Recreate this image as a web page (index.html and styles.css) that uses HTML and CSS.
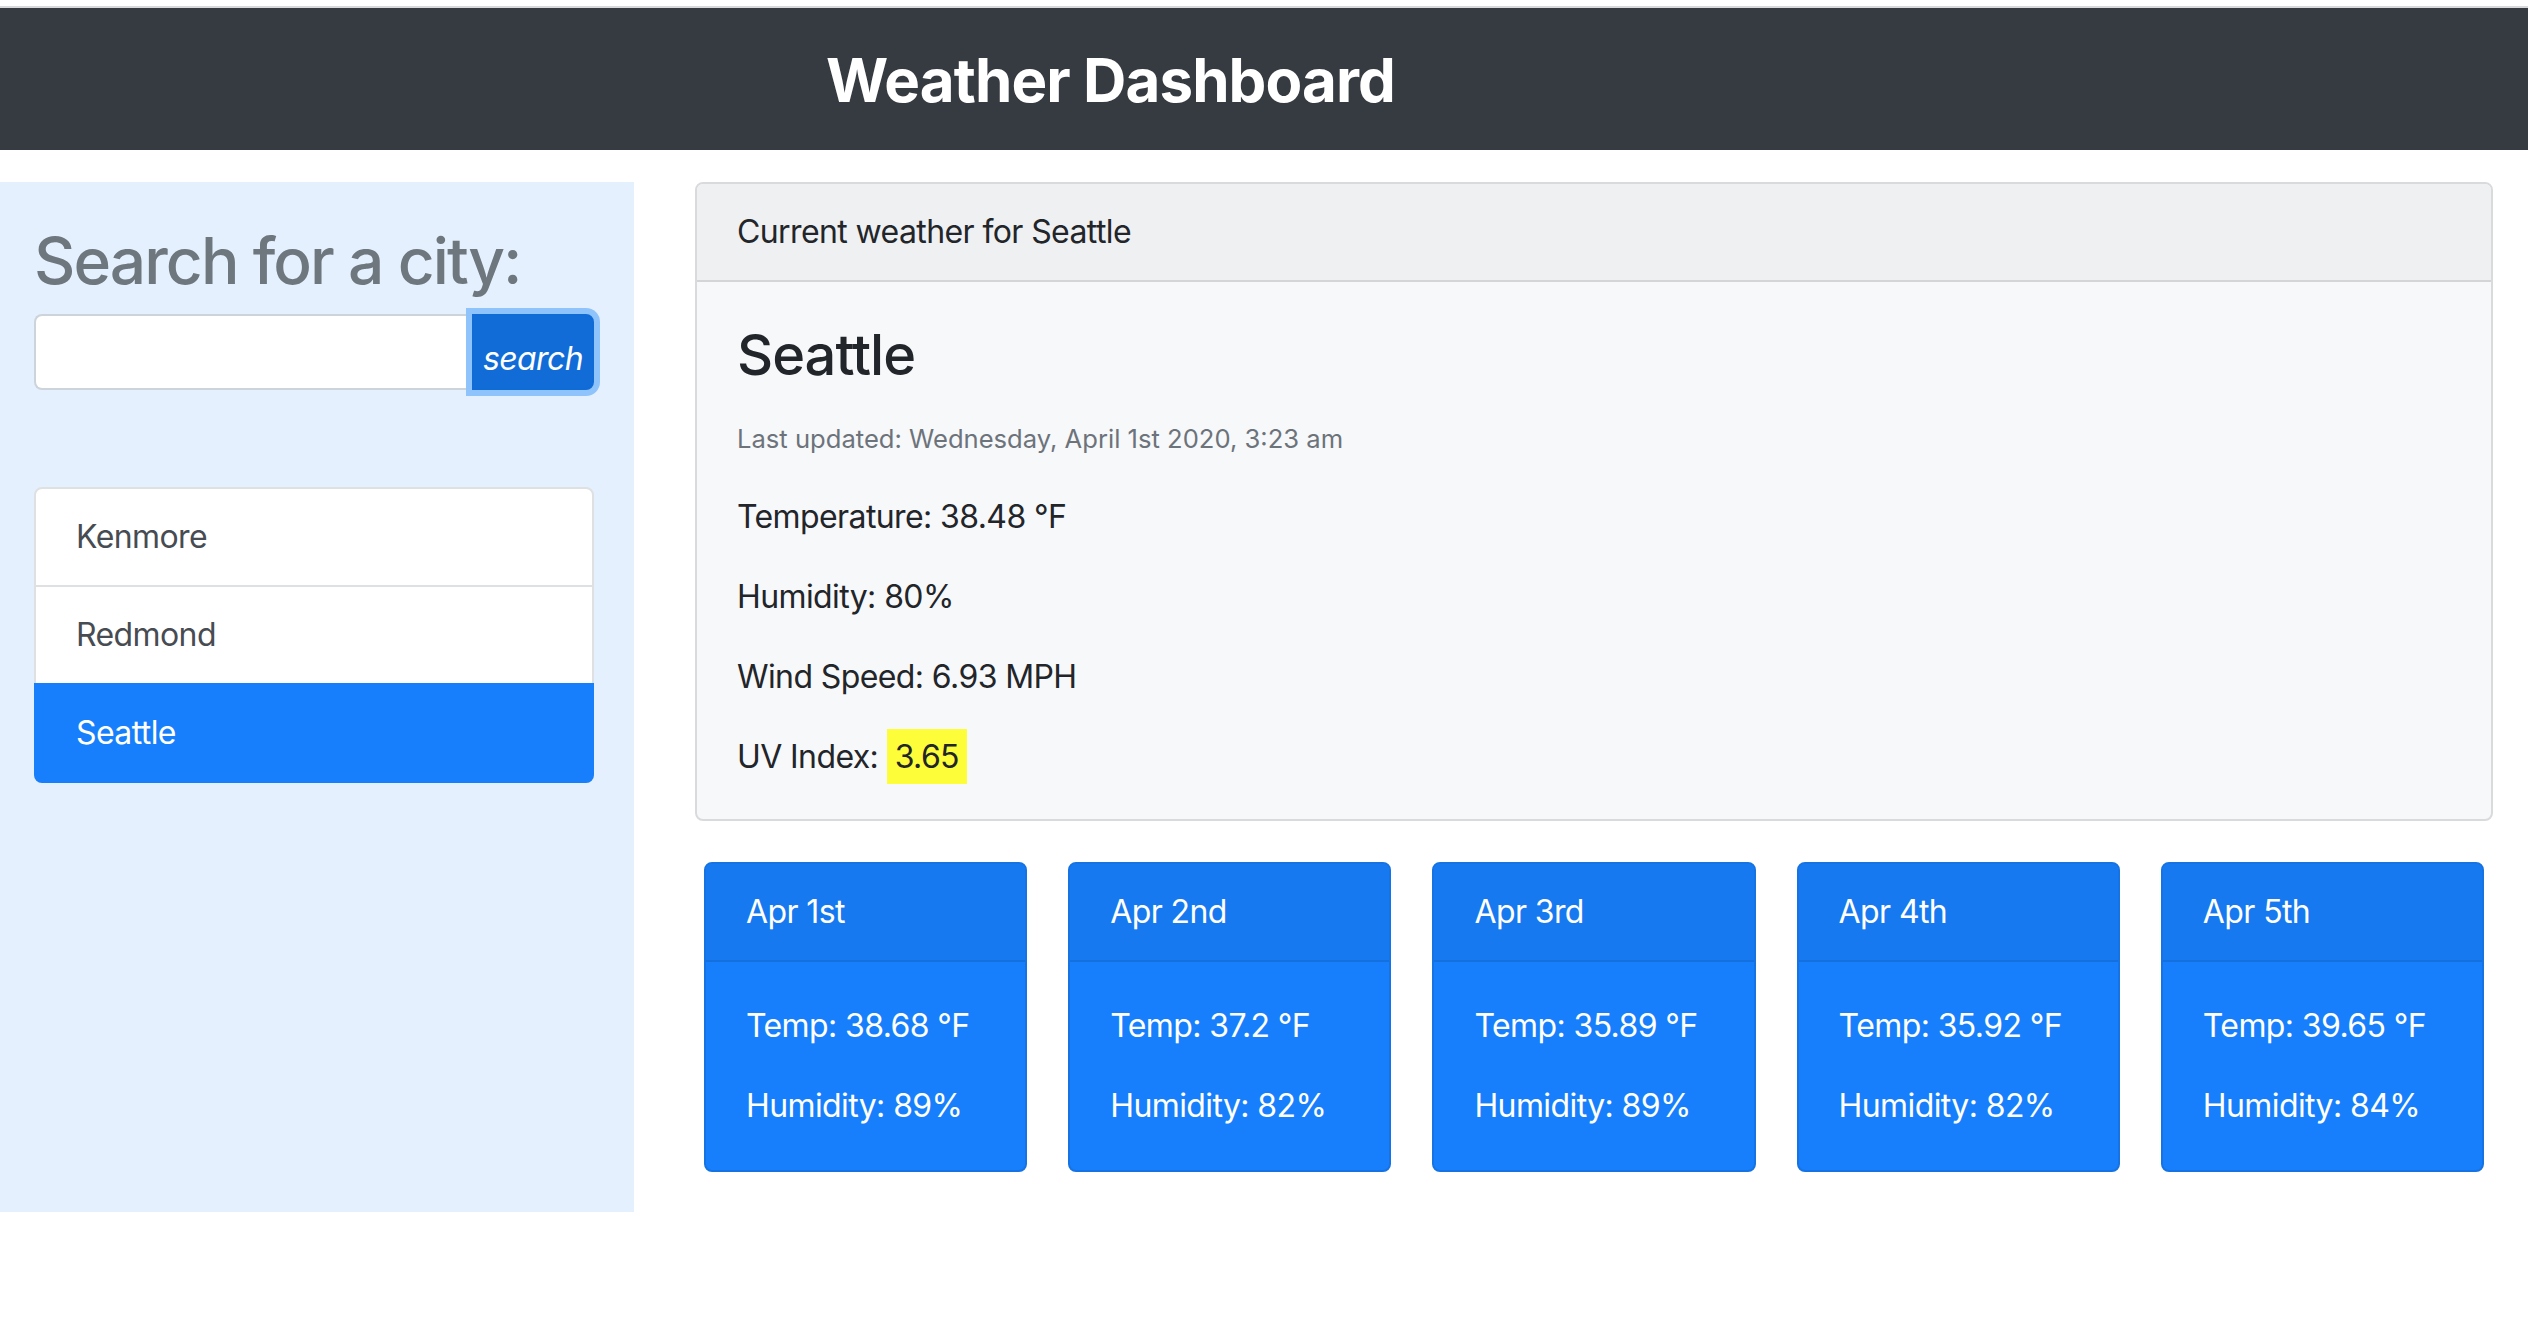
FILE: index.html
```html
<!DOCTYPE html>
<html lang="en">
<head>
<meta charset="utf-8">
<title>Weather Dashboard</title>
<link rel="stylesheet" href="styles.css">
</head>
<body>
<header class="topbar">
  <h1 class="topbar-title">Weather Dashboard</h1>
</header>
<div class="layout">
  <aside class="sidebar">
    <h2 class="sidebar-title">Search for a city:</h2>
    <form class="search">
      <input class="search-input" type="text" aria-label="City">
      <button class="search-btn" type="button">search</button>
    </form>
    <ul class="cities">
      <li class="city">Kenmore</li>
      <li class="city">Redmond</li>
      <li class="city active">Seattle</li>
    </ul>
  </aside>
  <main class="main">
    <section class="current">
      <div class="current-header">Current weather for Seattle</div>
      <div class="current-body">
        <h3 class="current-title">Seattle</h3>
        <p class="line"><small class="updated">Last updated: Wednesday, April 1st 2020, 3:23 am</small></p>
        <p class="line">Temperature: 38.48 °F</p>
        <p class="line">Humidity: 80%</p>
        <p class="line">Wind Speed: 6.93 MPH</p>
        <p class="line">UV Index: <span class="uv">3.65</span></p>
      </div>
    </section>
    <div class="forecast">
      <div class="day">
        <div class="day-header">Apr 1st</div>
        <div class="day-body"><p class="line">Temp: 38.68 °F</p><p class="line">Humidity: 89%</p></div>
      </div>
      <div class="day">
        <div class="day-header">Apr 2nd</div>
        <div class="day-body"><p class="line">Temp: 37.2 °F</p><p class="line">Humidity: 82%</p></div>
      </div>
      <div class="day">
        <div class="day-header">Apr 3rd</div>
        <div class="day-body"><p class="line">Temp: 35.89 °F</p><p class="line">Humidity: 89%</p></div>
      </div>
      <div class="day">
        <div class="day-header">Apr 4th</div>
        <div class="day-body"><p class="line">Temp: 35.92 °F</p><p class="line">Humidity: 82%</p></div>
      </div>
      <div class="day">
        <div class="day-header">Apr 5th</div>
        <div class="day-body"><p class="line">Temp: 39.65 °F</p><p class="line">Humidity: 84%</p></div>
      </div>
    </div>
  </main>
</div>
</body>
</html>
```

FILE: styles.css
```css
* { box-sizing: border-box; }

html, body {
  margin: 0;
  background: #ffffff;
}

body {
  padding-top: 6px;
  font-family: Inter, "Liberation Sans", sans-serif;
  font-size: 32px;
  line-height: 48px;
  letter-spacing: -0.6px;
  color: #222529;
}

/* top bar */
.topbar {
  background: #363a41;
  border-top: 2px solid #d8d9db;
  height: 144px;
  padding: 36px 0 0 826px;
}

.topbar-title {
  margin: 0;
  font-size: 60px;
  line-height: 72px;
  font-weight: 700;
  letter-spacing: -0.9px;
  color: #ffffff;
}

/* layout */
.layout {
  display: flex;
  gap: 61px;
  margin-top: 32px;
  align-items: flex-start;
}

.sidebar {
  flex: 0 0 634px;
  width: 634px;
  min-width: 0;
  height: 1030px;
  background: #e4f0fd;
  padding: 41px 40px 0 34px;
}

.sidebar-title {
  margin: 0 0 14px;
  font-size: 64px;
  line-height: 76.8px;
  font-weight: 500;
  letter-spacing: -1.9px;
  color: #6e767e;
}

.search {
  display: flex;
  height: 76px;
  margin: 0;
}

.search-input {
  flex: 1 1 auto;
  width: 0;
  min-width: 0;
  height: 76px;
  border: 2px solid #cdd3da;
  border-right: none;
  border-radius: 8px 0 0 8px;
  background: #ffffff;
  font: inherit;
  padding: 0 24px;
}

.search-btn {
  flex: 0 0 122px;
  height: 76px;
  border: 2px solid #116bd6;
  border-radius: 0 8px 8px 0;
  background: #116cd8;
  color: #ffffff;
  font-family: inherit;
  font-size: 32px;
  font-style: italic;
  letter-spacing: -0.6px;
  line-height: 48px;
  padding: 19px 0 5px;
  text-align: center;
  box-shadow: 0 0 0 6px #8fc3fc;
  position: relative;
}

.cities {
  list-style: none;
  margin: 97px 0 0;
  padding: 0;
  border: 2px solid #dfe0e1;
  border-radius: 8px;
  background: #ffffff;
}

.city {
  padding: 24px 40px;
  color: #474c52;
  border-top: 2px solid #dfe0e1;
  line-height: 48px;
  height: 98px;
}

.city:first-child {
  border-top: none;
  height: 96px;
}

.city.active {
  background: #177ffb;
  color: #ffffff;
  border-top-color: #177ffb;
  margin: 0 -2px -2px;
  padding: 24px 42px;
  height: 100px;
  border-radius: 0 0 8px 8px;
}

/* main */
.main {
  flex: 1 1 0;
  min-width: 0;
  padding-right: 35px;
}

.current {
  border: 2px solid #d9dadc;
  border-radius: 8px;
  background: #f7f8fa;
  overflow: hidden;
}

.current-header {
  background: #eff0f2;
  border-bottom: 2px solid #d4d5d7;
  padding: 24px 40px;
}

.current-body {
  padding: 40px 40px 38px;
}

.current-title {
  margin: 0 0 24px;
  font-size: 56px;
  line-height: 67.2px;
  font-weight: 500;
  letter-spacing: -1px;
}

.line {
  margin: 0 0 32px;
}

.line:last-child {
  margin-bottom: 0;
}

.updated {
  font-size: 25.6px;
  line-height: 1;
  letter-spacing: 0;
  color: #6c737a;
}

.uv {
  background: #fdfd3a;
  padding: 8px;
}

/* forecast */
.forecast {
  display: flex;
  gap: 41px;
  margin-top: 41px;
  padding: 0 9px;
}

.day {
  flex: 1 1 0;
  min-width: 0;
  background: #177ffb;
  border: 2px solid #1573e4;
  border-radius: 8px;
  color: #ffffff;
  overflow: hidden;
}

.day-header {
  background: #1679f0;
  border-bottom: 2px solid #1470de;
  padding: 24px 40px;
}

.day-body {
  padding: 40px;
}
```
